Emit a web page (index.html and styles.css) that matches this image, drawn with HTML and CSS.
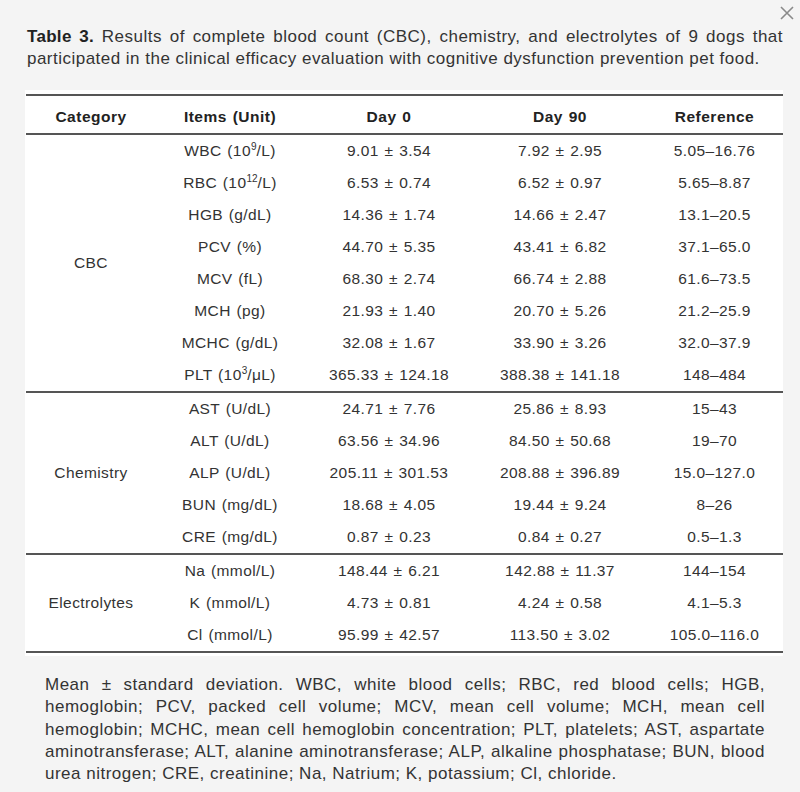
FILE: index.html
```html
<!DOCTYPE html>
<html>
<head>
<meta charset="utf-8">
<link rel="stylesheet" href="styles.css">
</head>
<body>
<div class="modal">
  <button class="close" aria-label="Close">
    <svg width="14" height="14" viewBox="0 0 14 14"><path d="M1 1 L13 13 M13 1 L1 13" stroke="#8a8a8a" stroke-width="1.6" fill="none"/></svg>
  </button>
  <p class="caption"><b>Table 3.</b> Results of complete blood count (CBC), chemistry, and electrolytes of 9 dogs that participated in the clinical efficacy evaluation with cognitive dysfunction prevention pet food.</p>
  <div class="table-wrap">
    <table class="data">
      <colgroup>
        <col class="c1"><col class="c2"><col class="c3"><col class="c4"><col class="c5">
      </colgroup>
      <thead>
        <tr><th>Category</th><th>Items (Unit)</th><th>Day 0</th><th>Day 90</th><th>Reference</th></tr>
      </thead>
      <tbody>
        <tr><td rowspan="8">CBC</td><td>WBC (10<sup>9</sup>/L)</td><td>9.01 ± 3.54</td><td>7.92 ± 2.95</td><td>5.05–16.76</td></tr>
        <tr><td>RBC (10<sup>12</sup>/L)</td><td>6.53 ± 0.74</td><td>6.52 ± 0.97</td><td>5.65–8.87</td></tr>
        <tr><td>HGB (g/dL)</td><td>14.36 ± 1.74</td><td>14.66 ± 2.47</td><td>13.1–20.5</td></tr>
        <tr><td>PCV (%)</td><td>44.70 ± 5.35</td><td>43.41 ± 6.82</td><td>37.1–65.0</td></tr>
        <tr><td>MCV (fL)</td><td>68.30 ± 2.74</td><td>66.74 ± 2.88</td><td>61.6–73.5</td></tr>
        <tr><td>MCH (pg)</td><td>21.93 ± 1.40</td><td>20.70 ± 5.26</td><td>21.2–25.9</td></tr>
        <tr><td>MCHC (g/dL)</td><td>32.08 ± 1.67</td><td>33.90 ± 3.26</td><td>32.0–37.9</td></tr>
        <tr><td>PLT (10<sup>3</sup>/μL)</td><td>365.33 ± 124.18</td><td>388.38 ± 141.18</td><td>148–484</td></tr>
      </tbody>
      <tbody>
        <tr><td rowspan="5">Chemistry</td><td>AST (U/dL)</td><td>24.71 ± 7.76</td><td>25.86 ± 8.93</td><td>15–43</td></tr>
        <tr><td>ALT (U/dL)</td><td>63.56 ± 34.96</td><td>84.50 ± 50.68</td><td>19–70</td></tr>
        <tr><td>ALP (U/dL)</td><td>205.11 ± 301.53</td><td>208.88 ± 396.89</td><td>15.0–127.0</td></tr>
        <tr><td>BUN (mg/dL)</td><td>18.68 ± 4.05</td><td>19.44 ± 9.24</td><td>8–26</td></tr>
        <tr><td>CRE (mg/dL)</td><td>0.87 ± 0.23</td><td>0.84 ± 0.27</td><td>0.5–1.3</td></tr>
      </tbody>
      <tbody>
        <tr><td rowspan="3">Electrolytes</td><td>Na (mmol/L)</td><td>148.44 ± 6.21</td><td>142.88 ± 11.37</td><td>144–154</td></tr>
        <tr><td>K (mmol/L)</td><td>4.73 ± 0.81</td><td>4.24 ± 0.58</td><td>4.1–5.3</td></tr>
        <tr><td>Cl (mmol/L)</td><td>95.99 ± 42.57</td><td>113.50 ± 3.02</td><td>105.0–116.0</td></tr>
      </tbody>
    </table>
  </div>
  <p class="footnote">Mean ± standard deviation. WBC, white blood cells; RBC, red blood cells; HGB, hemoglobin; PCV, packed cell volume; MCV, mean cell volume; MCH, mean cell hemoglobin; MCHC, mean cell hemoglobin concentration; PLT, platelets; AST, aspartate aminotransferase; ALT, alanine aminotransferase; ALP, alkaline phosphatase; BUN, blood urea nitrogen; CRE, creatinine; Na, Natrium; K, potassium; Cl, chloride.</p>
</div>
</body>
</html>
```

FILE: styles.css
```css
html, body {
  margin: 0;
  padding: 0;
  background: #f4f4f4;
}
body {
  font-family: "Liberation Sans", Arial, sans-serif;
  color: #333;
}
.modal {
  position: relative;
  padding: 26px 17px 0 25px;
}
.close {
  position: absolute;
  top: 5px;
  right: 5px;
  width: 16px;
  height: 16px;
  padding: 0;
  border: 0;
  background: none;
  display: flex;
  align-items: center;
  justify-content: center;
}
.caption {
  margin: 0 0 20px 2px;
  font-size: 17px;
  letter-spacing: 0.48px;
  line-height: 22px;
  text-align: justify;
  color: #333;
}
.caption b {
  color: #222;
  letter-spacing: 0.3px;
}
.table-wrap {
  background: #fff;
  padding: 4px 0 3px 1px;
}
.data {
  width: 100%;
  border-collapse: collapse;
  border-top: 2px solid #555;
  border-bottom: 2px solid #555;
  font-size: 15.5px;
  letter-spacing: 0.4px;
  word-spacing: 1px;
  color: #333;
}
.data .c1 { width: 130px; }
.data .c2 { width: 148px; }
.data .c3 { width: 170px; }
.data .c4 { width: 172px; }
.data thead {
  border-bottom: 2px solid #555;
}
.data th {
  height: 32px;
  padding: 5px 0 0;
  font-weight: bold;
  letter-spacing: 0.5px;
  color: #222;
  text-align: center;
}
.data td {
  height: 32px;
  padding: 0;
  text-align: center;
  vertical-align: middle;
}
.data tbody + tbody {
  border-top: 2px solid #555;
}
.data sup {
  font-size: 10px;
  line-height: 0;
  vertical-align: 6px;
  letter-spacing: 0;
}
.footnote {
  margin: 18px 18px 0 20px;
  font-size: 17px;
  letter-spacing: 0.5px;
  line-height: 22.3px;
  text-align: justify;
  color: #333;
}
```
